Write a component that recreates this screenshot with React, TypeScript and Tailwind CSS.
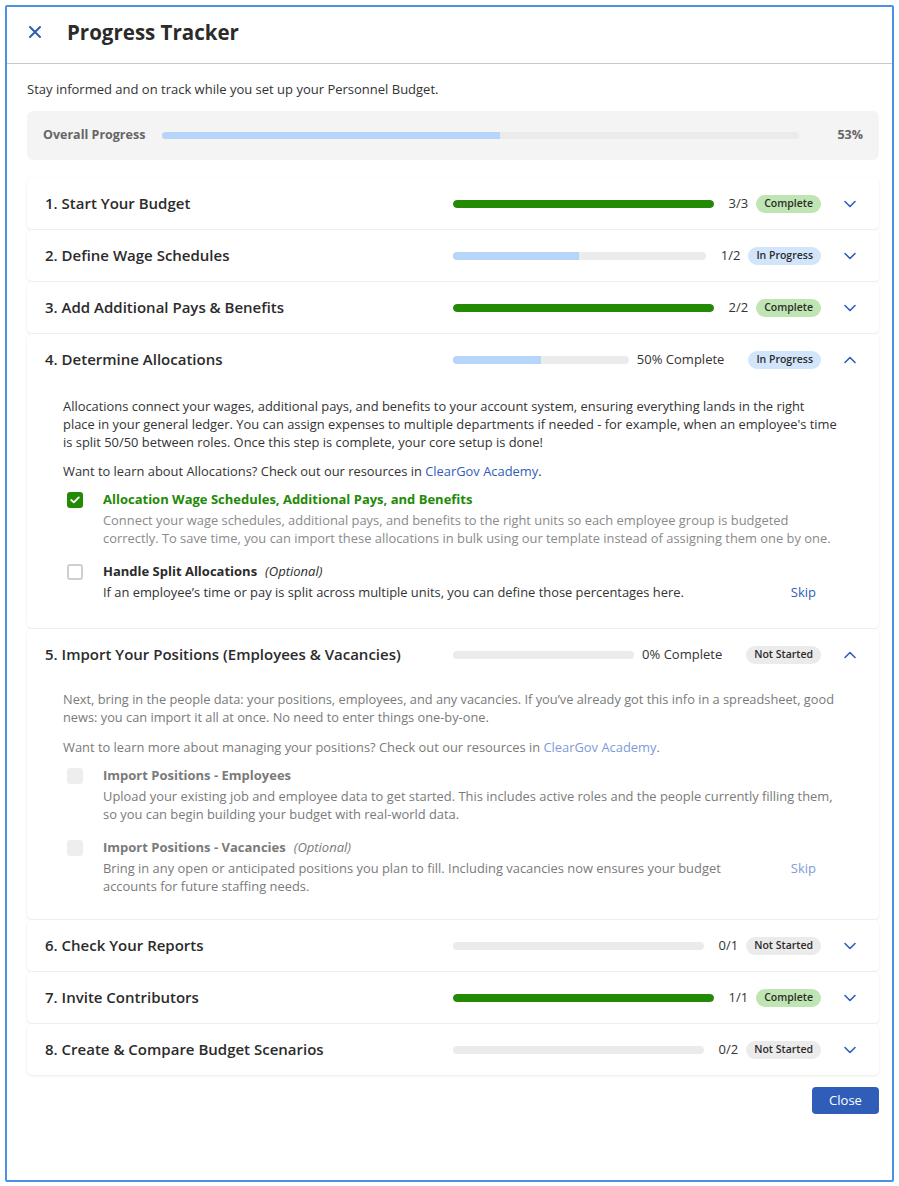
import React from "react";

const FONT = { fontFamily: '"Open Sans", "Liberation Sans", sans-serif' };

function Chevron({ up }: { up?: boolean }) {
  return (
    <svg width="12" height="8" viewBox="0 0 12 8" fill="none">
      {up ? (
        <path d="M1 6.5 L6 1.5 L11 6.5" stroke="#2f5db8" strokeWidth="1.6" strokeLinecap="round" strokeLinejoin="round" />
      ) : (
        <path d="M1 1.5 L6 6.5 L11 1.5" stroke="#2f5db8" strokeWidth="1.6" strokeLinecap="round" strokeLinejoin="round" />
      )}
    </svg>
  );
}

type Status = "Complete" | "In Progress" | "Not Started";

function Badge({ status }: { status: Status }) {
  const cls =
    status === "Complete"
      ? "bg-[#bfe5b3]"
      : status === "In Progress"
      ? "bg-[#d2e5fb]"
      : "bg-[#ebebeb]";
  return (
    <span className={`${cls} rounded-full h-[18px] px-[8px] flex items-center text-[10.5px] font-semibold text-[#2b2b2b] whitespace-nowrap`}>
      {status}
    </span>
  );
}

function Bar({ pct, green }: { pct: number; green?: boolean }) {
  return (
    <div className="flex-1 h-[8px] rounded-full bg-[#ebebeb] overflow-hidden">
      <div
        className={green ? "h-full rounded-full bg-[#238a06]" : "h-full bg-[#b7d5f8]"}
        style={{ width: `${pct}%` }}
      />
    </div>
  );
}

type Step = {
  title: string;
  pct: number;
  label: string;
  percentMode?: boolean;
  status: Status;
  open?: boolean;
  body?: React.ReactNode;
};

function CheckBox({ state }: { state: "checked" | "empty" | "disabled" }) {
  if (state === "checked")
    return (
      <div className="w-[16px] h-[16px] rounded-[3px] bg-[#238a06] flex items-center justify-center shrink-0">
        <svg width="10" height="8" viewBox="0 0 10 8" fill="none">
          <path d="M1.2 4 L3.8 6.4 L8.8 1.4" stroke="white" strokeWidth="1.8" strokeLinecap="round" strokeLinejoin="round" />
        </svg>
      </div>
    );
  if (state === "empty")
    return <div className="w-[16px] h-[16px] rounded-[3px] border-2 border-[#cfcfcf] bg-white shrink-0" />;
  return <div className="w-[16px] h-[16px] rounded-[3px] bg-[#eeeeee] shrink-0" />;
}

function Lines({ lines }: { lines: React.ReactNode[] }) {
  return (
    <>
      {lines.map((l, i) => (
        <span key={i} className="block whitespace-nowrap">
          {l}
        </span>
      ))}
    </>
  );
}

function Item({
  state,
  title,
  optional,
  lines,
  titleCls,
  descCls,
  skip,
  skipCls,
}: {
  state: "checked" | "empty" | "disabled";
  title: string;
  optional?: boolean;
  lines: string[];
  titleCls: string;
  descCls: string;
  skip?: boolean;
  skipCls?: string;
}) {
  return (
    <div className="flex items-start">
      <div className="pl-[4px] pt-[2px] w-[40px] shrink-0">
        <CheckBox state={state} />
      </div>
      <div className={skip ? "w-[660px]" : "flex-1"}>
        <div className={`text-[13px] font-bold leading-[18px] ${titleCls}`}>
          {title}
          {optional && <span className="font-normal italic ml-[8px]">(Optional)</span>}
        </div>
        <div className={`text-[12.9px] leading-[18px] mt-[3px] ${descCls}`}>
          <Lines lines={lines} />
        </div>
      </div>
      {skip && (
        <div className="flex-1 flex justify-end pr-[27px] pt-[21px]">
          <span className={`text-[13px] leading-[18px] ${skipCls}`}>Skip</span>
        </div>
      )}
    </div>
  );
}

const step4Body = (
  <div className="pl-[36px] pr-[36px] pt-[12px] pb-[27px] text-[12.9px] leading-[18px] text-[#333]">
    <p>
      <Lines
        lines={[
          "Allocations connect your wages, additional pays, and benefits to your account system, ensuring everything lands in the right",
          "place in your general ledger. You can assign expenses to multiple departments if needed - for example, when an employee's time",
          "is split 50/50 between roles. Once this step is complete, your core setup is done!",
        ]}
      />
    </p>
    <p className="mt-[11px]">
      Want to learn about Allocations? Check out our resources in <span className="text-[#2f5db8]">ClearGov Academy</span>.
    </p>
    <div className="mt-[10px] flex flex-col gap-[15px]">
      <Item
        state="checked"
        title="Allocation Wage Schedules, Additional Pays, and Benefits"
        titleCls="text-[#238a06]"
        descCls="text-[#8a8a8a]"
        lines={[
          "Connect your wage schedules, additional pays, and benefits to the right units so each employee group is budgeted",
          "correctly. To save time, you can import these allocations in bulk using our template instead of assigning them one by one.",
        ]}
      />
      <Item
        state="empty"
        title="Handle Split Allocations"
        optional
        titleCls="text-[#2b2b2b]"
        descCls="text-[#333]"
        skip
        skipCls="text-[#2f5db8]"
        lines={["If an employee’s time or pay is split across multiple units, you can define those percentages here."]}
      />
    </div>
  </div>
);

const step5Body = (
  <div className="pl-[36px] pr-[36px] pt-[10px] pb-[24px] text-[12.9px] leading-[18px] text-[#7a7a7a]">
    <p className="text-[12.8px]">
      <Lines
        lines={[
          "Next, bring in the people data: your positions, employees, and any vacancies. If you’ve already got this info in a spreadsheet, good",
          "news: you can import it all at once. No need to enter things one-by-one.",
        ]}
      />
    </p>
    <p className="mt-[12px]">
      Want to learn more about managing your positions? Check out our resources in{" "}
      <span className="text-[#7d9bd9]">ClearGov Academy</span>.
    </p>
    <div className="mt-[10px] flex flex-col gap-[15px]">
      <Item
        state="disabled"
        title="Import Positions - Employees"
        titleCls="text-[#7a7a7a]"
        descCls="text-[#7a7a7a]"
        lines={[
          "Upload your existing job and employee data to get started. This includes active roles and the people currently filling them,",
          "so you can begin building your budget with real-world data.",
        ]}
      />
      <Item
        state="disabled"
        title="Import Positions - Vacancies"
        optional
        titleCls="text-[#7a7a7a]"
        descCls="text-[#7a7a7a]"
        skip
        skipCls="text-[#7d9bd9]"
        lines={[
          "Bring in any open or anticipated positions you plan to fill. Including vacancies now ensures your budget",
          "accounts for future staffing needs.",
        ]}
      />
    </div>
  </div>
);

const steps: Step[] = [
  { title: "1. Start Your Budget", pct: 100, label: "3/3", status: "Complete" },
  { title: "2. Define Wage Schedules", pct: 50, label: "1/2", status: "In Progress" },
  { title: "3. Add Additional Pays & Benefits", pct: 100, label: "2/2", status: "Complete" },
  {
    title: "4. Determine Allocations",
    pct: 50,
    label: "50% Complete",
    percentMode: true,
    status: "In Progress",
    open: true,
    body: step4Body,
  },
  {
    title: "5. Import Your Positions (Employees & Vacancies)",
    pct: 0,
    label: "0% Complete",
    percentMode: true,
    status: "Not Started",
    open: true,
    body: step5Body,
  },
  { title: "6. Check Your Reports", pct: 0, label: "0/1", status: "Not Started" },
  { title: "7. Invite Contributors", pct: 100, label: "1/1", status: "Complete" },
  { title: "8. Create & Compare Budget Scenarios", pct: 0, label: "0/2", status: "Not Started" },
];

function StepCard({ s }: { s: Step }) {
  return (
    <div className="bg-white rounded-[5px] shadow-[0_1px_3px_rgba(0,0,0,0.09)]">
      <div className="h-[51px] flex items-center pl-[18px]">
        <div className="w-[408px] shrink-0 text-[15px] font-semibold text-[#2b2b2b]">{s.title}</div>
        <div className="flex-1 flex items-center">
          <Bar pct={s.pct} green={s.pct === 100} />
          {s.percentMode ? (
            <>
              <span className="ml-[8px] text-[13px] text-[#333] whitespace-nowrap">{s.label}</span>
              <span className="ml-[24px]">
                <Badge status={s.status} />
              </span>
            </>
          ) : (
            <>
              <span className="ml-[15px] text-[13px] text-[#333] whitespace-nowrap">{s.label}</span>
              <span className="ml-[8px]">
                <Badge status={s.status} />
              </span>
            </>
          )}
        </div>
        <div className="w-[58px] shrink-0 flex justify-center">
          <Chevron up={s.open} />
        </div>
      </div>
      {s.open && s.body}
    </div>
  );
}

export default function App() {
  return (
    <div className="w-[899px] h-[1186px] bg-white pt-[5px] pl-[5px]" style={FONT}>
      <div className="w-[889px] h-[1177px] border-2 border-[#4a90e6] rounded-[2px] flex flex-col bg-white">
        <div className="h-[57px] flex items-center border-b border-[#c8c8c8] shrink-0 pb-[6px]">
          <div className="w-[56px] flex justify-center">
            <svg width="12" height="12" viewBox="0 0 12 12" fill="none">
              <path d="M1 1 L11 11 M11 1 L1 11" stroke="#2f5db8" strokeWidth="2" strokeLinecap="round" />
            </svg>
          </div>
          <h1 className="ml-[4px] text-[20.5px] font-bold text-[#2b2b2b] leading-none">Progress Tracker</h1>
        </div>
        <div className="pl-[20px] pr-[13px] pt-[16px]">
          <p className="text-[13px] leading-[18px] text-[#333]">
            Stay informed and on track while you set up your Personnel Budget.
          </p>
          <div className="mt-[13px] h-[49px] bg-[#f4f4f4] rounded-[6px] flex items-center px-[16px]">
            <span className="text-[12.5px] font-bold text-[#666] w-[119px]">Overall Progress</span>
            <div className="flex-1 h-[7px] rounded-full bg-[#ebebeb] overflow-hidden">
              <div className="h-full bg-[#b7d5f8]" style={{ width: "53%" }} />
            </div>
            <span className="w-[64px] text-right text-[12.5px] font-bold text-[#666]">53%</span>
          </div>
          <div className="mt-[18px] flex flex-col gap-px">
            {steps.map((s) => (
              <StepCard key={s.title} s={s} />
            ))}
          </div>
          <div className="flex justify-end mt-[12px]">
            <button className="h-[27px] w-[67px] rounded-[4px] bg-[#2f5db8] text-white text-[13px]">Close</button>
          </div>
        </div>
      </div>
    </div>
  );
}
